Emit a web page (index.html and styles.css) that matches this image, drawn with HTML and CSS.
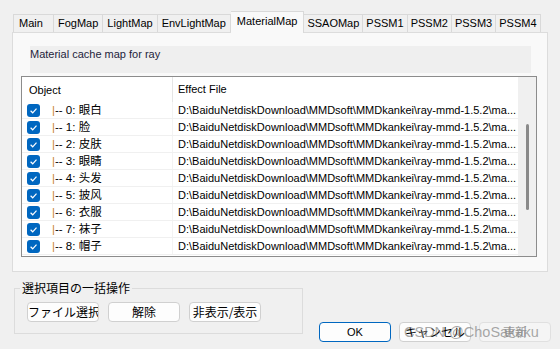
FILE: index.html
```html
<!DOCTYPE html>
<html lang="ja">
<head>
    <meta charset="UTF-8">
    <title>MaterialMap</title>
    <link rel="stylesheet" href="styles.css">
</head>
<body>
<div class="dialog">

    <!-- Tab strip -->
    <div class="tabs">
        <div class="tab first">Main</div>
        <div class="tab">FogMap</div>
        <div class="tab">LightMap</div>
        <div class="tab">EnvLightMap</div>
        <div class="tab active">MaterialMap</div>
        <div class="tab tight">SSAOMap</div>
        <div class="tab tight">PSSM1</div>
        <div class="tab tight">PSSM2</div>
        <div class="tab tight">PSSM3</div>
        <div class="tab tight">PSSM4</div>
    </div>

    <!-- Tab page -->
    <div class="panel">
        <div class="caption">Material cache map for ray</div>

        <div class="list">
            <div class="list-main">
                <div class="list-head">
                    <div class="col-obj">Object</div>
                    <div class="col-file">Effect File</div>
                </div>
                <div class="row">
                    <div class="col-obj"><span class="check"><svg viewBox="0 0 13 13"><rect width="13" height="13" rx="3"/><path d="M3.6 6.8 L5.7 8.8 L9.5 4.6"/></svg></span><span class="pipe">|</span>-- 0: 眼白</div>
                    <div class="col-file">D:\BaiduNetdiskDownload\MMDsoft\MMDkankei\ray-mmd-1.5.2\ma...</div>
                </div>
                <div class="row">
                    <div class="col-obj"><span class="check"><svg viewBox="0 0 13 13"><rect width="13" height="13" rx="3"/><path d="M3.6 6.8 L5.7 8.8 L9.5 4.6"/></svg></span><span class="pipe">|</span>-- 1: 脸</div>
                    <div class="col-file">D:\BaiduNetdiskDownload\MMDsoft\MMDkankei\ray-mmd-1.5.2\ma...</div>
                </div>
                <div class="row">
                    <div class="col-obj"><span class="check"><svg viewBox="0 0 13 13"><rect width="13" height="13" rx="3"/><path d="M3.6 6.8 L5.7 8.8 L9.5 4.6"/></svg></span><span class="pipe">|</span>-- 2: 皮肤</div>
                    <div class="col-file">D:\BaiduNetdiskDownload\MMDsoft\MMDkankei\ray-mmd-1.5.2\ma...</div>
                </div>
                <div class="row">
                    <div class="col-obj"><span class="check"><svg viewBox="0 0 13 13"><rect width="13" height="13" rx="3"/><path d="M3.6 6.8 L5.7 8.8 L9.5 4.6"/></svg></span><span class="pipe">|</span>-- 3: 眼睛</div>
                    <div class="col-file">D:\BaiduNetdiskDownload\MMDsoft\MMDkankei\ray-mmd-1.5.2\ma...</div>
                </div>
                <div class="row">
                    <div class="col-obj"><span class="check"><svg viewBox="0 0 13 13"><rect width="13" height="13" rx="3"/><path d="M3.6 6.8 L5.7 8.8 L9.5 4.6"/></svg></span><span class="pipe">|</span>-- 4: 头发</div>
                    <div class="col-file">D:\BaiduNetdiskDownload\MMDsoft\MMDkankei\ray-mmd-1.5.2\ma...</div>
                </div>
                <div class="row">
                    <div class="col-obj"><span class="check"><svg viewBox="0 0 13 13"><rect width="13" height="13" rx="3"/><path d="M3.6 6.8 L5.7 8.8 L9.5 4.6"/></svg></span><span class="pipe">|</span>-- 5: 披风</div>
                    <div class="col-file">D:\BaiduNetdiskDownload\MMDsoft\MMDkankei\ray-mmd-1.5.2\ma...</div>
                </div>
                <div class="row">
                    <div class="col-obj"><span class="check"><svg viewBox="0 0 13 13"><rect width="13" height="13" rx="3"/><path d="M3.6 6.8 L5.7 8.8 L9.5 4.6"/></svg></span><span class="pipe">|</span>-- 6: 衣服</div>
                    <div class="col-file">D:\BaiduNetdiskDownload\MMDsoft\MMDkankei\ray-mmd-1.5.2\ma...</div>
                </div>
                <div class="row">
                    <div class="col-obj"><span class="check"><svg viewBox="0 0 13 13"><rect width="13" height="13" rx="3"/><path d="M3.6 6.8 L5.7 8.8 L9.5 4.6"/></svg></span><span class="pipe">|</span>-- 7: 袜子</div>
                    <div class="col-file">D:\BaiduNetdiskDownload\MMDsoft\MMDkankei\ray-mmd-1.5.2\ma...</div>
                </div>
                <div class="row">
                    <div class="col-obj"><span class="check"><svg viewBox="0 0 13 13"><rect width="13" height="13" rx="3"/><path d="M3.6 6.8 L5.7 8.8 L9.5 4.6"/></svg></span><span class="pipe">|</span>-- 8: 帽子</div>
                    <div class="col-file">D:\BaiduNetdiskDownload\MMDsoft\MMDkankei\ray-mmd-1.5.2\ma...</div>
                </div>
            </div>
            <div class="scrollbar"><div class="thumb"></div></div>
        </div>
    </div>

    <!-- Bottom area -->
    <div class="footer">
        <fieldset class="group">
            <legend>選択項目の一括操作</legend>
            <div class="group-buttons">
                <button class="btn jp">ファイル選択</button>
                <button class="btn jp">解除</button>
                <button class="btn jp">非表示/表示</button>
            </div>
        </fieldset>
        <div class="actions">
            <button class="btn default">OK</button>
            <button class="btn jp">キャンセル</button>
            <button class="btn jp disabled">更新</button>
        </div>
    </div>

    <div class="watermark">CSDN @ChoSakaku</div>
</div>
</body>
</html>
```

FILE: styles.css
```css
* {
    box-sizing: border-box;
}

html, body {
    margin: 0;
    padding: 0;
    background: #f0f0f0;
    font-family: 'Liberation Sans', 'Noto Sans CJK SC', sans-serif;
    font-size: 11px;
    color: #000;
}

.dialog {
    position: relative;
    width: 560px;
    height: 349px;
    overflow: hidden;
}

/* Tabs */
.tabs {
    display: flex;
    padding: 14px 0 0 13px;
    position: relative;
    z-index: 1;
    height: 33px;
}

.tab {
    height: 18px;
    line-height: 17px;
    padding: 0 4px;
    border: 1px solid #d9d9d9;
    border-left: none;
    border-bottom: none;
    background: #f0f0f0;
    white-space: nowrap;
}

.tab.first {
    min-width: 41px;
    padding-left: 5px;
    border-left: 1px solid #d9d9d9;
}

.tab.tight {
    padding: 0 3px;
}

.tab.active {
    margin-top: -3px;
    height: 22px;
    padding: 0 6px;
    background: #f9f9f9;
    line-height: 19px;
}

/* Tab page */
.panel {
    margin: -1px 0 0 12px;
    width: 536px;
    height: 240px;
    background: #f9f9f9;
    border: 1px solid #dcdcdc;
    padding: 13px 0 0 8px;
}

.caption {
    margin-left: 9px;
    width: 501px;
    height: 27px;
    background: #efefef;
    color: #1e1e3c;
    line-height: 14px;
    padding-top: 1px;
}

.list {
    display: flex;
    margin-top: 3px;
    width: 516px;
    height: 181px;
    border: 1px solid #8c8c8c;
    background: #fff;
}

.list-main {
    flex: 1;
    overflow: hidden;
}

.list-head, .row {
    display: flex;
    white-space: nowrap;
}

.list-head {
    height: 25px;
    line-height: 24px;
}

.list-head .col-obj {
    border-right: 1px solid #e5e5e5;
    padding-left: 7px;
}

.row {
    height: 17px;
    line-height: 16px;
    border-bottom: 1px solid #f0f0f0;
}

.col-obj {
    width: 151px;
    flex: none;
    display: flex;
    align-items: center;
    padding-left: 5px;
}

.row .col-obj {
    border-right: 1px solid #f3f3f3;
    font-size: 11.5px;
}

.col-file {
    padding-left: 5px;
    overflow: hidden;
}

.check {
    width: 13px;
    height: 13px;
    margin-right: 12px;
    display: flex;
}

.check svg {
    width: 13px;
    height: 13px;
}

.check rect {
    fill: #0067c0;
}

.check path {
    fill: none;
    stroke: #fff;
    stroke-width: 1.2;
}

.pipe {
    color: #c8842c;
}

.scrollbar {
    width: 18px;
    flex: none;
    background: #f0f0f0;
    position: relative;
}

.thumb {
    position: absolute;
    left: 8px;
    top: 47px;
    width: 3px;
    height: 86px;
    border-radius: 2px;
    background: #8a8a8a;
}

/* Footer */
.footer {
    display: flex;
    align-items: flex-end;
    padding: 8px 0 0 14px;
}

.group {
    margin: 0 0 8px 0;
    width: 289px;
    border: 1px solid #dcdcdc;
    padding: 0 5px 11px 5px;
    font-family: 'Noto Sans CJK JP', sans-serif;
    font-size: 12px;
}

.group legend {
    padding: 0 2px;
    line-height: 16px;
}

.group-buttons {
    display: flex;
    gap: 9px;
    margin: 6px 0 0 7px;
}

.btn {
    width: 72px;
    height: 20px;
    padding: 0;
    background: #fdfdfd;
    border: 1px solid #d0d0d0;
    border-radius: 4px;
    font-family: 'Liberation Sans', 'Noto Sans CJK JP', sans-serif;
    font-size: 11px;
    line-height: 18px;
    color: #000;
    white-space: nowrap;
    overflow: hidden;
}

.btn.jp {
    font-family: 'Noto Sans CJK JP', sans-serif;
    font-size: 12px;
}

.btn.default {
    border-color: #0067c0;
}

.btn.disabled {
    color: #a0a0a0;
    background: #f5f5f5;
    border-color: #e0e0e0;
}

.actions {
    display: flex;
    gap: 8px;
    margin-left: 16px;
}

.watermark {
    position: absolute;
    left: 404px;
    top: 324px;
    font-family: 'Liberation Sans', sans-serif;
    font-size: 14.5px;
    color: rgba(130, 130, 130, 0.7);
    white-space: nowrap;
}
```
